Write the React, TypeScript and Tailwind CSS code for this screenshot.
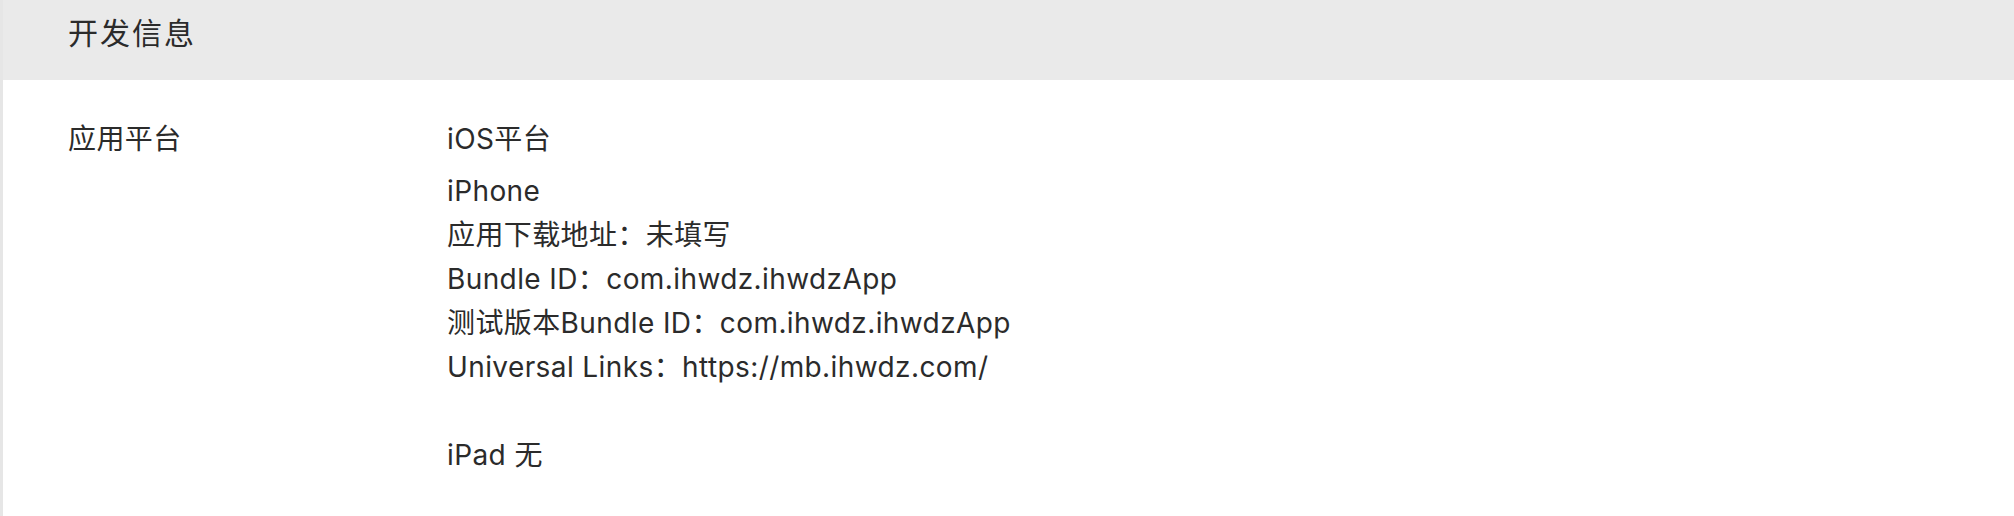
import React from 'react';

const iphoneLines = [
  'iPhone',
  '应用下载地址：未填写',
  'Bundle ID：com.ihwdz.ihwdzApp',
  '测试版本Bundle ID：com.ihwdz.ihwdzApp',
  'Universal Links：https://mb.ihwdz.com/',
];

const App = () => {
  return (
    <div
      style={{ fontFamily: 'Inter, "Noto Sans CJK SC", sans-serif' }}
      className="w-full h-[516px] bg-white border-l-[3px] border-[#e6e6e6] text-[#2b2b2b] overflow-hidden"
    >
      {/* section header */}
      <div className="h-[80px] bg-[#eaeaea] pl-[65px] pt-[13px]">
        <h2 className="text-[30px] leading-[40px] tracking-[2px] font-normal">开发信息</h2>
      </div>

      <div className="flex pl-[65px] pt-[37px] tracking-[0.4px]">
        <div className="w-[379px] shrink-0 text-[28px] leading-[44px]">应用平台</div>
        <div className="flex flex-col text-[28px] leading-[44px]">
          <div className="mb-[8px]">iOS平台</div>
          {iphoneLines.map((line) => (
            <div key={line}>{line}</div>
          ))}
          <div className="h-[44px]" />
          <div>iPad 无</div>
        </div>
      </div>
    </div>
  );
};

export default App;
